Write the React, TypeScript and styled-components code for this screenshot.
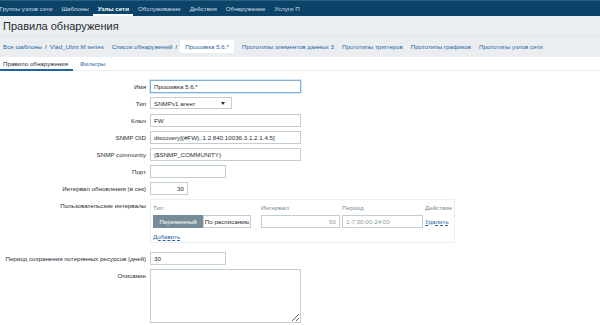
import styled, { createGlobalStyle } from 'styled-components';

const GlobalStyle = createGlobalStyle`
  html, body {
    margin: 0;
    padding: 0;
    background: #ffffff;
  }
  body {
    font-family: 'Liberation Sans', Arial, sans-serif;
    color: #1f2c33;
    overflow: hidden;
  }
  * {
    box-sizing: border-box;
  }
`;

const navItems = [
  'Группы узлов сети',
  'Шаблоны',
  'Узлы сети',
  'Обслуживание',
  'Действия',
  'Обнаружение',
  'Услуги П',
];

const crumbs = [
  'Прототипы элементов данных 3',
  'Прототипы триггеров',
  'Прототипы графиков',
  'Прототипы узлов сети',
];

const App = () => {
  return (
    <Page>
      <GlobalStyle />
      <TopNav>
        {navItems.map((item) => (
          <NavItem key={item} $active={item === 'Узлы сети'}>
            {item}
          </NavItem>
        ))}
      </TopNav>
      <Header>
        <Title>Правила обнаружения</Title>
      </Header>
      <Breadcrumbs>
        <CrumbGroup>
          <Crumb>Все шаблоны</Crumb>
          <Sep>/</Sep>
          <Crumb>Vlad_Ubnt M series</Crumb>
        </CrumbGroup>
        <CrumbGroup>
          <Crumb>Список обнаружений</Crumb>
          <Sep>/</Sep>
          <CurrentCrumb>Прошивка 5.6.*</CurrentCrumb>
        </CrumbGroup>
        {crumbs.map((c) => (
          <CrumbGroup key={c}>
            <Crumb>{c}</Crumb>
          </CrumbGroup>
        ))}
      </Breadcrumbs>
      <Tabs>
        <Tab $active>Правило обнаружения</Tab>
        <Tab>Фильтры</Tab>
      </Tabs>
      <Form>
        <Label>Имя</Label>
        <Field>
          <TextInput $w={151} $focused readOnly defaultValue="Прошивка 5.6.*" />
        </Field>

        <Label>Тип</Label>
        <Field>
          <SelectBox>
            <span>SNMPv1 агент</span>
            <Caret />
          </SelectBox>
        </Field>

        <Label>Ключ</Label>
        <Field>
          <TextInput $w={151} readOnly defaultValue="FW" />
        </Field>

        <Label>SNMP OID</Label>
        <Field>
          <TextInput $w={151} readOnly defaultValue="discovery[{#FW},.1.2.840.10036.3.1.2.1.4.5]" />
        </Field>

        <Label>SNMP community</Label>
        <Field>
          <TextInput $w={151} readOnly defaultValue="{$SNMP_COMMUNITY}" />
        </Field>

        <Label>Порт</Label>
        <Field>
          <TextInput $w={76} readOnly defaultValue="" />
        </Field>

        <Label>Интервал обновления (в сек)</Label>
        <Field>
          <TextInput $w={38} $right readOnly defaultValue="30" />
        </Field>

        <Label>Пользовательские интервалы</Label>
        <Field>
          <IntervalBox>
            <IntervalGrid>
              <ColHead>Тип</ColHead>
              <ColHead>Интервал</ColHead>
              <ColHead>Период</ColHead>
              <ColHead>Действие</ColHead>
              <Segmented>
                <SegButton $active>Переменный</SegButton>
                <SegButton>По расписанию</SegButton>
              </Segmented>
              <TextInput $w={79} $right $muted readOnly defaultValue="50" />
              <TextInput $w={81} $muted readOnly defaultValue="1-7,00:00-24:00" />
              <LinkText>Удалить</LinkText>
            </IntervalGrid>
            <AddLink>Добавить</AddLink>
          </IntervalBox>
        </Field>

        <Label $spaced>Период сохранения потерянных ресурсов (дней)</Label>
        <Field $spaced>
          <TextInput $w={76} readOnly defaultValue="30" />
        </Field>

        <Label>Описание</Label>
        <Field>
          <TextArea readOnly defaultValue="" />
        </Field>
      </Form>
    </Page>
  );
};

export default App;

const Page = styled.div`
  width: 600px;
  height: 325px;
  overflow: hidden;
  font-size: 6.2px;
`;

const TopNav = styled.nav`
  height: 16px;
  background: #0b4468;
  border-top: 1px solid #2a5f80;
  display: flex;
  align-items: stretch;
  margin-left: -5px;
`;

const NavItem = styled.div<{ $active?: boolean }>`
  padding: 0 4.5px;
  display: flex;
  align-items: center;
  color: ${(p) => (p.$active ? '#ffffff' : '#d2dde5')};
  font-weight: ${(p) => (p.$active ? 700 : 400)};
  white-space: nowrap;
  border-bottom: 2px solid ${(p) => (p.$active ? '#ffffff' : 'transparent')};
  border-top: 2px solid transparent;
`;

const Header = styled.div`
  height: 20px;
  background: #ebeef0;
  border-bottom: 1px solid #e1e6e9;
  display: flex;
  align-items: center;
  padding-left: 3px;
`;

const Title = styled.h1`
  margin: 0;
  font-size: 11px;
  font-weight: 400;
  color: #1f2c33;
  white-space: nowrap;
`;

const Breadcrumbs = styled.div`
  height: 21px;
  background: #ebeef0;
  display: flex;
  align-items: center;
  padding-left: 3px;
  gap: 8px;
  white-space: nowrap;
`;

const CrumbGroup = styled.div`
  display: flex;
  align-items: center;
  gap: 3px;
`;

const Crumb = styled.span`
  color: #1f65a6;
`;

const Sep = styled.span`
  color: #1f2c33;
`;

const CurrentCrumb = styled.span`
  background: #ffffff;
  color: #1f65a6;
  padding: 3px 5px;
`;

const Tabs = styled.div`
  height: 14px;
  display: flex;
  align-items: stretch;
  border-bottom: 1px solid #ebeef0;
  gap: 4px;
`;

const Tab = styled.div<{ $active?: boolean }>`
  padding: 0 5px 0 3px;
  display: flex;
  align-items: center;
  color: ${(p) => (p.$active ? '#1f2c33' : '#1f65a6')};
  border-bottom: 2px solid ${(p) => (p.$active ? '#1f65a6' : 'transparent')};
  margin-bottom: -1px;
  white-space: nowrap;
`;

const Form = styled.div`
  display: grid;
  grid-template-columns: 146px 1fr;
  column-gap: 4px;
  row-gap: 4px;
  padding-top: 9px;
`;

const Label = styled.div<{ $spaced?: boolean }>`
  text-align: right;
  line-height: 13px;
  white-space: nowrap;
  margin-top: ${(p) => (p.$spaced ? '5px' : '0')};
`;

const Field = styled.div<{ $spaced?: boolean }>`
  display: flex;
  align-items: flex-start;
  margin-top: ${(p) => (p.$spaced ? '5px' : '0')};
`;

const TextInput = styled.input<{ $w: number; $right?: boolean; $muted?: boolean; $focused?: boolean }>`
  width: ${(p) => p.$w}px;
  height: 13px;
  padding: 0 3px;
  margin: 0;
  font-family: inherit;
  font-size: 6.2px;
  color: ${(p) => (p.$muted ? '#8a9aa3' : '#1f2c33')};
  text-align: ${(p) => (p.$right ? 'right' : 'left')};
  border: 1px solid ${(p) => (p.$focused ? '#7fb0d9' : '#c3cdd2')};
  box-shadow: ${(p) => (p.$focused ? '0 0 0 0.5px #a9cbe8' : 'none')};
  background: #ffffff;
  outline: none;
  border-radius: 0;
`;

const SelectBox = styled.div`
  width: 82px;
  height: 12px;
  border: 1px solid #c3cdd2;
  display: flex;
  align-items: center;
  justify-content: space-between;
  padding: 0 6px 0 3px;
  white-space: nowrap;
`;

const Caret = styled.span`
  width: 0;
  height: 0;
  border-left: 2px solid transparent;
  border-right: 2px solid transparent;
  border-top: 3px solid #1f2c33;
`;

const IntervalBox = styled.div`
  width: 305px;
  height: 44px;
  border: 1px solid #ebeef0;
  padding: 4px 2px 0 2px;
`;

const IntervalGrid = styled.div`
  display: grid;
  grid-template-columns: 108px 81px 83px auto;
  row-gap: 3px;
  align-items: center;
`;

const ColHead = styled.div`
  color: #768d99;
  line-height: 8px;
  white-space: nowrap;
`;

const Segmented = styled.div`
  display: flex;
`;

const SegButton = styled.div<{ $active?: boolean }>`
  height: 13px;
  display: flex;
  align-items: center;
  justify-content: center;
  padding: 0 2px;
  width: ${(p) => (p.$active ? '50px' : '48px')};
  white-space: nowrap;
  background: ${(p) => (p.$active ? '#768d99' : '#ffffff')};
  color: ${(p) => (p.$active ? '#ffffff' : '#1f2c33')};
  border: 1px solid ${(p) => (p.$active ? '#768d99' : '#c3cdd2')};
`;

const LinkText = styled.span`
  color: #1f65a6;
  text-decoration: underline;
  text-decoration-style: dashed;
  white-space: nowrap;
`;

const AddLink = styled(LinkText)`
  display: inline-block;
  margin-top: 5px;
`;

const TextArea = styled.textarea`
  width: 151px;
  height: 54px;
  border: 1px solid #c3cdd2;
  padding: 2px 3px;
  margin: 0;
  font-family: inherit;
  font-size: 6.2px;
  outline: none;
  border-radius: 0;
`;
